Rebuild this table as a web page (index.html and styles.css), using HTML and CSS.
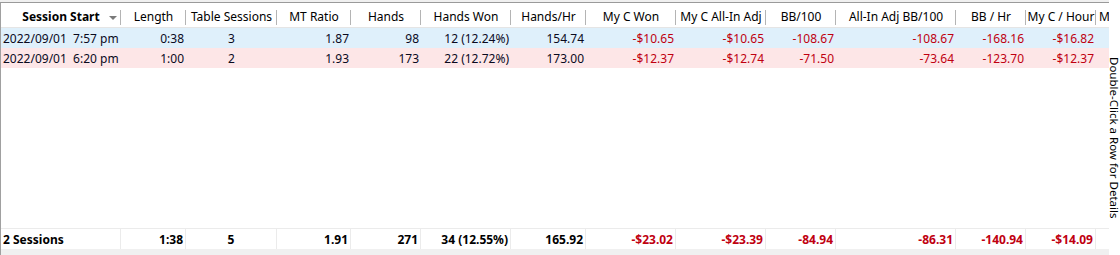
FILE: index.html
```html
<!DOCTYPE html>
<html>
<head>
<meta charset="utf-8">
<link rel="stylesheet" href="styles.css">
</head>
<body>
<div class="wrap">
  <div class="grid">
    <div class="row head">
      <div class="hc sort"><span></span><span class="b">Session Start</span><span class="arrow"></span></div>
      <div class="hc">Length</div>
      <div class="hc">Table Sessions</div>
      <div class="hc">MT Ratio</div>
      <div class="hc">Hands</div>
      <div class="hc">Hands Won</div>
      <div class="hc">Hands/Hr</div>
      <div class="hc">My C Won</div>
      <div class="hc">My C All-In Adj</div>
      <div class="hc">BB/100</div>
      <div class="hc">All-In Adj BB/100</div>
      <div class="hc">BB / Hr</div>
      <div class="hc">My C / Hour</div>
      <div class="hc last">M</div>
    </div>
    <div class="row data blue">
      <div class="c l">2022/09/01  7:57 pm</div>
      <div class="c">0:38</div>
      <div class="c m">3</div>
      <div class="c">1.87</div>
      <div class="c">98</div>
      <div class="c">12 (12.24%)</div>
      <div class="c">154.74</div>
      <div class="c red">-$10.65</div>
      <div class="c red">-$10.65</div>
      <div class="c red">-108.67</div>
      <div class="c red">-108.67</div>
      <div class="c red">-168.16</div>
      <div class="c red">-$16.82</div>
      <div class="c"></div>
    </div>
    <div class="row data pink">
      <div class="c l">2022/09/01  6:20 pm</div>
      <div class="c">1:00</div>
      <div class="c m">2</div>
      <div class="c">1.93</div>
      <div class="c">173</div>
      <div class="c">22 (12.72%)</div>
      <div class="c">173.00</div>
      <div class="c red">-$12.37</div>
      <div class="c red">-$12.74</div>
      <div class="c red">-71.50</div>
      <div class="c red">-73.64</div>
      <div class="c red">-123.70</div>
      <div class="c red">-$12.37</div>
      <div class="c"></div>
    </div>
    <div class="fill"></div>
    <div class="row foot">
      <div class="c l">2 Sessions</div>
      <div class="c">1:38</div>
      <div class="c m">5</div>
      <div class="c">1.91</div>
      <div class="c">271</div>
      <div class="c">34 (12.55%)</div>
      <div class="c">165.92</div>
      <div class="c red">-$23.02</div>
      <div class="c red">-$23.39</div>
      <div class="c red">-84.94</div>
      <div class="c red">-86.31</div>
      <div class="c red">-140.94</div>
      <div class="c red">-$14.09</div>
      <div class="c"></div>
    </div>
    <div class="bottom"></div>
  </div>
  <div class="side"><span class="vtext">Double-Click a Row for Details</span></div>
</div>
</body>
</html>
```

FILE: styles.css
```css
html, body {
  margin: 0;
  padding: 0;
  background: #ffffff;
}
body {
  font-family: "Noto Sans", "Open Sans", sans-serif;
  font-size: 12px;
  color: #000;
  width: 1120px;
  height: 255px;
  overflow: hidden;
}
.wrap {
  display: flex;
  height: 255px;
  background: #f0f0f0;
}
.grid {
  width: 1108px;
  display: flex;
  flex-direction: column;
  border-left: 1px solid #a0a0a0;
  border-top: 1px solid #9a9a9a;
  margin-top: 2px;
  background: #fff;
}
.row {
  display: grid;
  grid-template-columns: 120px 65px 91px 74px 70px 90px 75px 90px 90px 70px 120px 70px 70px 13px;
}
.head {
  height: 24px;
  border-bottom: 1px solid #e5e5e5;
  background: #fff;
}
.hc {
  display: flex;
  align-items: center;
  justify-content: center;
  padding-top: 3px;
  white-space: nowrap;
  overflow: hidden;
  background: linear-gradient(#b4b4b4, #b4b4b4) right 7px / 1px 15px no-repeat;
}
.hc.last {
  background: none;
  justify-content: flex-start;
  padding-left: 3px;
}
.sort {
  display: grid;
  grid-template-columns: 1fr auto 1fr;
  align-items: center;
}
.b { font-weight: bold; }
.arrow {
  justify-self: end;
  margin-right: 4px;
  margin-top: 3px;
  width: 0;
  height: 0;
  border-left: 4px solid transparent;
  border-right: 4px solid transparent;
  border-top: 4px solid #7a7a7a;
}
.data {
  height: 20px;
}
.blue { background: #dff0fb; }
.pink { background: #fde6e7; }
.c {
  display: flex;
  align-items: center;
  justify-content: flex-end;
  padding-right: 2px;
  white-space: pre;
  overflow: hidden;
  color: #0a0a1e;
}
.c.l {
  justify-content: flex-start;
  padding-left: 2px;
  padding-right: 0;
}
.c.m {
  justify-content: center;
  padding-right: 0;
}
.c.red { color: #c00010; }
.fill {
  flex: 1;
  background: #fff;
}
.foot {
  height: 20px;
  border-top: 1px solid #ebebeb;
  font-weight: bold;
  background: #fff;
}
.foot .c {
  border-right: 1px solid #ebebeb;
  color: #000;
}
.foot .c.red { color: #c00010; }
.foot .c:last-child { border-right: none; }
.bottom {
  height: 6px;
  background: #f0f0f0;
}
.side {
  flex: 1;
  background: #fff;
  display: flex;
  justify-content: center;
  padding-top: 57px;
  overflow: visible;
}
.vtext {
  writing-mode: vertical-rl;
  font-size: 11.5px;
  line-height: 11px;
  color: #000;
  white-space: nowrap;
  height: 152px;
}
```
